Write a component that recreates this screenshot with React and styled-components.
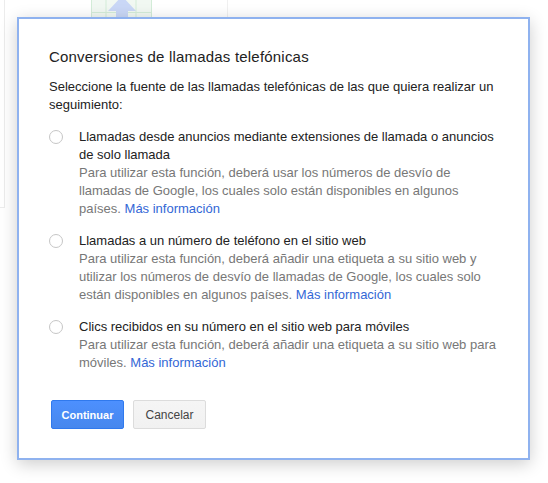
import React from "react";
import styled, { createGlobalStyle } from "styled-components";

const GlobalStyle = createGlobalStyle`
  html, body {
    margin: 0;
    padding: 0;
    background: #ffffff;
  }
  body {
    font-family: "Liberation Sans", Arial, sans-serif;
    width: 548px;
    height: 483px;
    overflow: hidden;
  }
`;

const options = [
  {
    label: "Llamadas desde anuncios mediante extensiones de llamada o anuncios de solo llamada",
    desc: "Para utilizar esta función, deberá usar los números de desvío de llamadas de Google, los cuales solo están disponibles en algunos países.",
  },
  {
    label: "Llamadas a un número de teléfono en el sitio web",
    desc: "Para utilizar esta función, deberá añadir una etiqueta a su sitio web y utilizar los números de desvío de llamadas de Google, los cuales solo están disponibles en algunos países.",
  },
  {
    label: "Clics recibidos en su número en el sitio web para móviles",
    desc: "Para utilizar esta función, deberá añadir una etiqueta a su sitio web para móviles.",
  },
];

const App = () => {
  return (
    <Page>
      <GlobalStyle />
      <Backdrop>
        <SideRule />
        <TopRule />
        <UploadIcon width="62" height="18" viewBox="0 0 62 18">
          <rect x="0.5" y="-1" width="60" height="19" fill="#f1f8f2" stroke="#d3ecd8" />
          <line x1="15" y1="0" x2="15" y2="18" stroke="#d3ecd8" />
          <line x1="45" y1="0" x2="45" y2="18" stroke="#d3ecd8" />
          <line x1="0" y1="12.5" x2="61" y2="12.5" stroke="#d3ecd8" />
          <polygon points="31,-4 17,11 25,11 25,18 37,18 37,11 45,11" fill="#c9d7f6" />
        </UploadIcon>
      </Backdrop>
      <Dialog>
        <Title>Conversiones de llamadas telefónicas</Title>
        <Intro>
          Seleccione la fuente de las llamadas telefónicas de las que quiera
          realizar un seguimiento:
        </Intro>
        <OptionList>
          {options.map((o) => (
            <Option key={o.label}>
              <Radio type="radio" name="source" />
              <OptionText>
                <Label>{o.label}</Label>
                <Desc>
                  {o.desc} <Link href="#">Más información</Link>
                </Desc>
              </OptionText>
            </Option>
          ))}
        </OptionList>
        <Actions>
          <Button primary>Continuar</Button>
          <Button>Cancelar</Button>
        </Actions>
      </Dialog>
    </Page>
  );
};

const Page = styled.div`
  position: relative;
  width: 548px;
  height: 483px;
  padding: 17px 0 0 17px;
  box-sizing: border-box;
`;

const Backdrop = styled.div`
  position: absolute;
  inset: 0;
  pointer-events: none;
`;

const SideRule = styled.div`
  position: absolute;
  left: 0;
  top: 0;
  width: 4px;
  height: 207px;
  border-right: 1px solid #ececec;
  border-bottom: 1px solid #ececec;
`;

const TopRule = styled.div`
  position: absolute;
  left: 227px;
  top: 0;
  width: 1px;
  height: 17px;
  background: #f0f0f0;
`;

const UploadIcon = styled.svg`
  position: absolute;
  left: 91px;
  top: 0;
`;

const Dialog = styled.div`
  position: relative;
  width: 513px;
  height: 443px;
  box-sizing: border-box;
  background: #ffffff;
  border: 2px solid #8fb2ef;
  box-shadow: 0 4px 16px rgba(0, 0, 0, 0.2);
  padding: 28px 28px 0 30px;
`;

const Title = styled.h2`
  margin: 0;
  font-size: 15px;
  letter-spacing: 0.2px;
  font-weight: normal;
  line-height: 20px;
  color: #222222;
`;

const Intro = styled.p`
  margin: 11px 0 0 0;
  font-size: 13px;
  line-height: 18px;
  color: #222222;
`;

const OptionList = styled.div`
  display: flex;
  flex-direction: column;
  gap: 14px;
  margin-top: 14px;
`;

const Option = styled.label`
  display: flex;
  align-items: flex-start;
  gap: 16px;
`;

const Radio = styled.input`
  appearance: none;
  margin: 2px 0 0 0;
  width: 14px;
  height: 14px;
  flex: none;
  border: 1px solid #c6c6c6;
  border-radius: 50%;
  background: #ffffff;
  box-sizing: border-box;
`;

const OptionText = styled.div`
  display: flex;
  flex-direction: column;
  flex: 1;
`;

const Label = styled.div`
  font-size: 13px;
  line-height: 18px;
  color: #222222;
`;

const Desc = styled.div`
  font-size: 13px;
  line-height: 18px;
  color: #777777;
`;

const Link = styled.a`
  color: #3367d6;
  text-decoration: none;
`;

const Actions = styled.div`
  display: flex;
  gap: 9px;
  margin: 28px 0 0 2px;
`;

const Button = styled.button`
  height: 29px;
  min-width: 73px;
  padding: 0 8px;
  box-sizing: border-box;
  border-radius: 2px;
  font-family: "Liberation Sans", Arial, sans-serif;
  font-size: ${(p) => (p.primary ? "11px" : "12px")};
  font-weight: ${(p) => (p.primary ? "bold" : "normal")};
  border: 1px solid ${(p) => (p.primary ? "#3079ed" : "#dcdcdc")};
  background: ${(p) =>
    p.primary
      ? "linear-gradient(#4d90fe, #4787ed)"
      : "linear-gradient(#f5f5f5, #f1f1f1)"};
  color: ${(p) => (p.primary ? "#ffffff" : "#444444")};
`;

export default App;
